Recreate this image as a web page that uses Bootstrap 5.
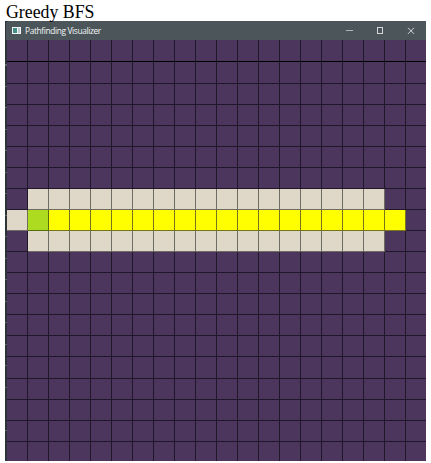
<!DOCTYPE html>
<html lang="en"><head><meta charset="utf-8"><title>Greedy BFS</title>
<link href="https://cdn.jsdelivr.net/npm/bootstrap@5.3.0/dist/css/bootstrap.min.css" rel="stylesheet">
<style>
body{width:431px;height:463px;background:#fff;padding-left:5px}
.page-title{height:21px;font:17.8px/24px "Liberation Serif",serif;color:#000;padding-left:1px;white-space:nowrap}
.app-window{width:421px;height:440px;background:repeating-linear-gradient(#2a3439 0 20.5px,#59635f 20.5px 21.5px) 0 23px/2px 100% no-repeat #2a3439}
.title-bar{height:19px;margin-left:1px;background:#4b555a;color:#f4f6f6;font:8.4px/19px "Open Sans","Noto Sans",sans-serif;letter-spacing:-.38px;border-top-left-radius:3px}
.app-icon{margin-left:6px;margin-right:3px}
.controls{width:96px}
.board{margin-left:2px;height:421px;display:grid;grid-template-columns:repeat(19,21px) 20px;grid-template-rows:22px 22px repeat(13,21px) 22px repeat(3,21px) 19px}
.tile{background:#4c365e;border-right:1px solid #21172a;border-bottom:1px solid #21172a}
.tile:nth-child(20n){border-right:0}
.tile:nth-child(-n+20){border-bottom-color:#000}
.tile:nth-child(n+381){border-bottom:0}
.visited{background:#dfd8c9;border-color:#6f6c64}
.route{background:#ff0;border-color:#76761a}
.origin{background:#acdb20;border-color:#566e10}
</style></head>
<body>
<h1 class="page-title m-0">Greedy BFS</h1>
<main class="app-window overflow-hidden">
<header class="title-bar d-flex align-items-center">
<svg class="app-icon" width="10" height="9" viewBox="0 0 10 9"><path fill="#f4f6f5" d="M0 1h9v7H0z"/><path fill="#3f8f84" d="M1 2h4v5H1z"/><path fill="#b8c9cc" d="M6 2h2v5H6z"/></svg>
<span>Pathfinding Visualizer</span>
<svg class="controls ms-auto" height="19" viewBox="0 0 96 19" fill="none" stroke="#d4d8d9" shape-rendering="crispEdges"><path stroke="#aeb4b6" d="M16 9.5h7"/><path d="M47.5 6.5h5v6h-5z"/><path shape-rendering="auto" d="M78 6.8l6 6m0-6l-6 6"/></svg>
</header>
<section class="board" id="board"></section>
</main>
<script src="https://cdn.jsdelivr.net/npm/bootstrap@5.3.0/dist/js/bootstrap.bundle.min.js"></script>
<script>
const board=document.getElementById('board');
for(let r=0;r<20;r++)for(let c=0;c<20;c++){
 const t=document.createElement('div');t.className='tile';
 if((r===7||r===9)&&c>0&&c<18||r===8&&c===0)t.classList.add('visited');
 if(r===8&&c===1)t.classList.add('origin');
 if(r===8&&c>1&&c<19)t.classList.add('route');
 board.append(t);
}
</script>
</body></html>
